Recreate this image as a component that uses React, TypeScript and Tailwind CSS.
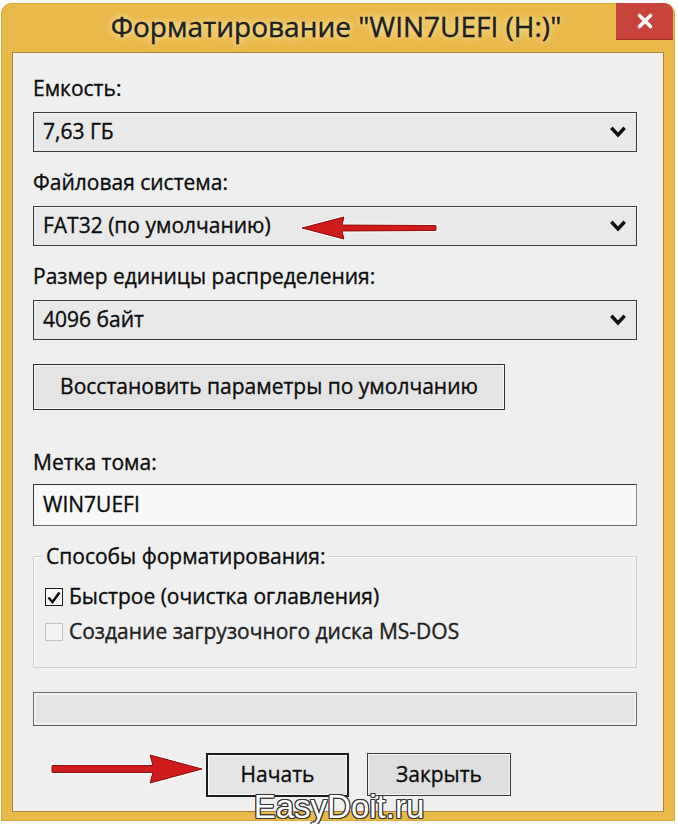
import React from 'react';

const Chevron: React.FC = () => (
  <svg width="16" height="12" viewBox="0 0 16 12" className="shrink-0">
    <polyline points="2.5,3 8,9 13.5,3" fill="none" stroke="#111" strokeWidth="3.4" strokeLinecap="square" />
  </svg>
);

const Combo: React.FC<{ value: string }> = ({ value }) => (
  <div className="h-[40px] flex items-center justify-between pl-[9px] pr-[10px] border border-[#3c3c3c] bg-[#e9e9e9] shadow-[inset_0_1px_0_#f7f7f7]">
    <span>{value}</span>
    <Chevron />
  </div>
);

const Label: React.FC<{ children: React.ReactNode; className?: string }> = ({ children, className }) => (
  <div className={'h-[24px] leading-[24px] ' + (className ?? '')}>{children}</div>
);

export default function App() {
  return (
    <div className="relative w-[678px] h-[824px] bg-white overflow-hidden font-['Open_Sans',sans-serif] text-[21px] font-medium text-[#0c0c0c] [-webkit-text-stroke:0.35px_#111]">
      <div className="ml-[2px] mt-[4px] w-[672px] h-[816px] flex flex-col rounded-t-[10px] bg-[#e8b848] shadow-[0_0_0_1px_#d9a93c]">
        {/* title bar */}
        <div className="relative h-[48px] flex items-center justify-center pb-[4px] pr-[4px]">
          <span className="text-[28px] text-[#222] [text-shadow:0_0_6px_#f6e2a8,0_0_10px_#f6e2a8]">
            Форматирование "WIN7UEFI (H:)"
          </span>
          <div className="absolute -top-[1px] right-[1px] w-[57px] h-[37px] rounded-tr-[9px] bg-[#c8433c] border-b border-[#9c2f2a] flex items-center justify-center">
            <svg width="18" height="18" viewBox="0 0 18 18">
              <path d="M3.5 3.5 L14.5 14.5 M14.5 3.5 L3.5 14.5" stroke="#fff" strokeWidth="3.6" strokeLinecap="round" />
            </svg>
          </div>
        </div>

        {/* client area */}
        <div className="mx-[10px] mb-[8px] flex-1 flex flex-col bg-[#efefef] border border-[#a8853c] pl-[20px] pr-[26px] pt-[23px]">
          <Label>Емкость:</Label>
          <div className="mt-[12px]">
            <Combo value="7,63 ГБ" />
          </div>

          <Label className="mt-[18px]">Файловая система:</Label>
          <div className="mt-[12px]">
            <Combo value="FAT32 (по умолчанию)" />
          </div>

          <Label className="mt-[18px]">Размер единицы распределения:</Label>
          <div className="mt-[12px]">
            <Combo value="4096 байт" />
          </div>

          <button className="mt-[24px] w-[472px] h-[46px] flex items-center justify-center border border-[#333] bg-[#e4e4e4] shadow-[inset_0_0_0_1px_#f6f6f6]">
            Восстановить параметры по умолчанию
          </button>

          <Label className="mt-[40px]">Метка тома:</Label>
          <div className="mt-[10px] h-[42px] flex items-center pl-[9px] border border-[#3a3a3a] border-r-[#8a8a8a] border-b-[#6a6a6a] bg-[#f8f8f8]">
            WIN7UEFI
          </div>

          {/* format options group */}
          <div className="relative mt-[30px] h-[112px] border border-[#cfcfcf] shadow-[inset_1px_1px_0_#fbfbfb] pt-[28px] pl-[11px] flex flex-col gap-[11px]">
            <div className="absolute -top-[13px] left-[9px] px-[3px] bg-[#efefef] leading-[24px]">
              Способы форматирования:
            </div>
            <div className="flex items-center gap-[6px] h-[24px]">
              <div className="w-[18px] h-[18px] border-[1.5px] border-[#1a1a1a] bg-[#f7f7f7] flex items-center justify-center">
                <svg width="14" height="13" viewBox="0 0 14 13">
                  <polyline points="1.5,6.5 5.5,11 12.5,1.5" fill="none" stroke="#111" strokeWidth="2.6" />
                </svg>
              </div>
              <span>Быстрое (очистка оглавления)</span>
            </div>
            <div className="flex items-center gap-[6px] h-[24px]">
              <div className="w-[18px] h-[18px] border border-[#c2c2c2] bg-[#f3f3f3]" />
              <span className="text-[#262626]">Создание загрузочного диска MS-DOS</span>
            </div>
          </div>

          {/* progress bar */}
          <div className="mt-[24px] h-[34px] border border-[#6e6e6e] border-b-[#5a5a5a] bg-[#e4e4e4] shadow-[inset_0_0_0_2px_#f2f2f2]" />

          {/* action buttons */}
          <div className="mt-[27px] flex gap-[18px] pl-[173px]">
            <button className="w-[143px] h-[44px] flex items-center justify-center border-2 border-[#1c1c1c] bg-[#e5e5e5] shadow-[inset_0_0_0_1px_#fafafa]">
              Начать
            </button>
            <button className="w-[144px] h-[43px] flex items-center justify-center border border-[#3a3a3a] bg-[#dedede] shadow-[inset_0_0_0_1px_#f2f2f2]">
              Закрыть
            </button>
          </div>
        </div>
      </div>

      {/* red arrow pointing at the file system */}
      <svg className="absolute left-[296px] top-[214px]" width="146" height="28" viewBox="0 0 146 28">
        <path d="M6 14 L48 3 L46 11 L140 11.5 L140 16.5 L46 17 L48 25 Z" fill="#cf1b1b" stroke="#fff" strokeWidth="3" strokeLinejoin="round" paintOrder="stroke" />
        <path d="M6 14 L48 3 L46 11 L140 11.5 L140 16.5 L46 17 L48 25 Z" fill="#cf1b1b" stroke="#8e1111" strokeWidth="1" strokeLinejoin="round" />
      </svg>

      {/* red arrow pointing at the start button */}
      <svg className="absolute left-[46px] top-[752px]" width="162" height="34" viewBox="0 0 162 34">
        <path d="M156 17 L104 3 L107 13.5 L6 13.5 L6 20.5 L107 20.5 L104 31 Z" fill="#cf1b1b" stroke="#fff" strokeWidth="3" strokeLinejoin="round" paintOrder="stroke" />
        <path d="M156 17 L104 3 L107 13.5 L6 13.5 L6 20.5 L107 20.5 L104 31 Z" fill="#cf1b1b" stroke="#8e1111" strokeWidth="1" strokeLinejoin="round" />
      </svg>

      {/* watermark */}
      <div className="absolute left-0 right-0 bottom-0 flex justify-center">
        <span className="font-['Liberation_Sans',sans-serif] font-normal text-[33px] leading-[34px] text-white [-webkit-text-stroke:0px] [text-shadow:1px_1px_0_#333,-1px_-1px_0_#333,1px_-1px_0_#333,-1px_1px_0_#333,0_1px_0_#333,0_-1px_0_#333,1px_0_0_#333,-1px_0_0_#333]">
          EasyDoit.ru
        </span>
      </div>
    </div>
  );
}
